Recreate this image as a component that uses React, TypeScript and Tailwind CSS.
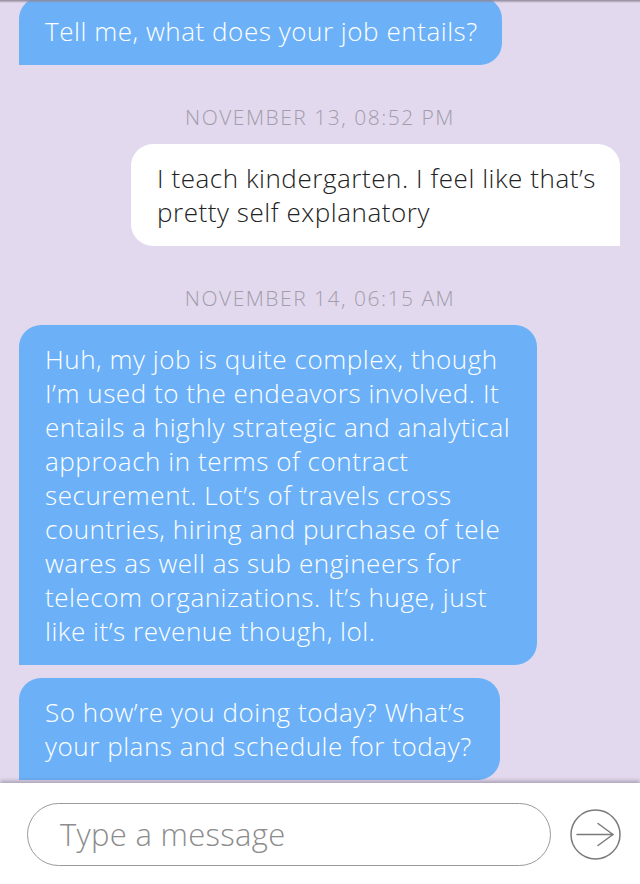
import React from 'react';

const FONT = { fontFamily: '"Open Sans", Lato, sans-serif' };

const DateLabel: React.FC<{ children: React.ReactNode }> = ({ children }) => (
  <div className="mt-[40px] mb-[15px] text-center text-[21px] font-light leading-[24px] tracking-[1.5px] text-[#a29daa]">{children}</div>
);

const Incoming: React.FC<{ width: string; lines: string[]; className?: string }> = ({ width, lines, className = '' }) => (
  <div
    className={`ml-[19px] rounded-[22px] rounded-bl-none bg-[#6cb1f8] px-[26px] py-[17px] text-[26px] font-light leading-[34px] tracking-[0.55px] text-white whitespace-nowrap ${width} ${className}`}
  >
    {lines.map((l, i) => (
      <div key={i}>{l}</div>
    ))}
  </div>
);

const Outgoing: React.FC<{ lines: string[] }> = ({ lines }) => (
  <div className="ml-auto mr-[20px] w-[489px] rounded-[22px] rounded-br-none bg-white px-[26px] py-[17px] text-[26px] font-light leading-[34px] tracking-[0.55px] text-[#222] whitespace-nowrap">
    {lines.map((l, i) => (
      <div key={i}>{l}</div>
    ))}
  </div>
);

const SendIcon = () => (
  <svg width="51" height="51" viewBox="0 0 51 51" fill="none" stroke="#7a7a7a" strokeWidth="1.5" strokeLinecap="round" strokeLinejoin="round">
    <circle cx="25.5" cy="25.5" r="24.5" />
    <path d="M7 25.5H43" />
    <path d="M28 14.5L43 25.5L28 36.5" />
  </svg>
);

export default function App() {
  return (
    <div className="flex h-[884px] w-[640px] flex-col overflow-hidden bg-[#e2d9ee]" style={FONT}>
      <div className="relative flex-1 overflow-hidden">
        <div className="pointer-events-none absolute inset-x-0 top-0 z-10 h-[3px] bg-gradient-to-b from-[#8f8898] to-transparent" />
        <div className="flex flex-col">
          <Incoming width="w-[483px]" className="-mt-[3px]" lines={['Tell me, what does your job entails?']} />
          <DateLabel>NOVEMBER 13, 08:52 PM</DateLabel>
          <Outgoing lines={['I teach kindergarten. I feel like that\u2019s', 'pretty self explanatory']} />
          <DateLabel>NOVEMBER 14, 06:15 AM</DateLabel>
          <Incoming
            width="w-[518px]"
            lines={[
              'Huh, my job is quite complex, though',
              'I\u2019m used to the endeavors involved. It',
              'entails a highly strategic and analytical',
              'approach in terms of contract',
              'securement. Lot\u2019s of travels cross',
              'countries, hiring and purchase of tele',
              'wares as well as sub engineers for',
              'telecom organizations. It\u2019s huge, just',
              'like it\u2019s revenue though, lol.',
            ]}
          />
          <Incoming
            width="w-[481px]"
            className="mt-[13px]"
            lines={['So how\u2019re you doing today? What\u2019s', 'your plans and schedule for today?']}
          />
        </div>
      </div>
      <div className="relative z-10 flex h-[101px] shrink-0 items-start gap-[19px] bg-white pl-[27px] pt-[20px] shadow-[0_-2px_4px_rgba(60,50,70,0.35)]">
        <div className="flex h-[63px] w-[524px] items-center rounded-full border-[1.5px] border-[#9a9a9a] pl-[32px] text-[31px] font-light tracking-[0.3px] text-[#8c8c8c]">
          Type a message
        </div>
        <div className="mt-[6px]">
          <SendIcon />
        </div>
      </div>
    </div>
  );
}
